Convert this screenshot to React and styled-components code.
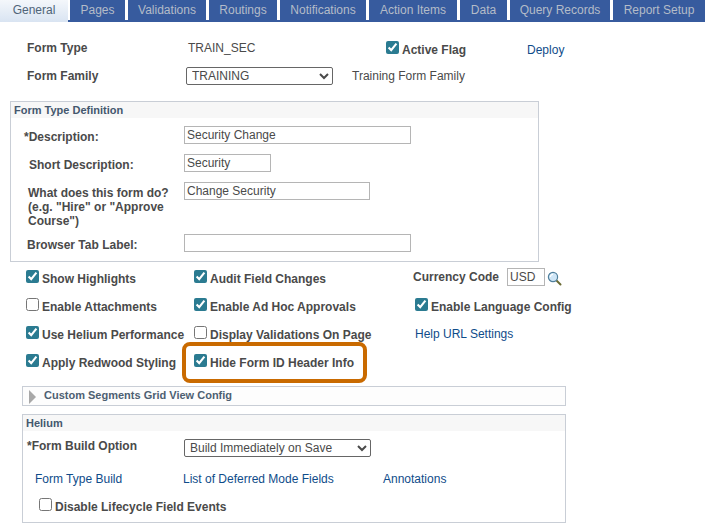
import React from "react";
import styled, { createGlobalStyle } from "styled-components";

const GlobalStyle = createGlobalStyle`
	html, body {
		margin: 0;
		background: #fff;
		font-family: "Liberation Sans", Arial, sans-serif;
		font-size: 12px;
		color: #4a4a4a;
	}
`;

const Page = styled.div`
	position: relative;
	width: 705px;
	height: 524px;
	overflow: hidden;
`;

const TabBar = styled.div`
	display: flex;
	height: 22px;
	background: linear-gradient(to top, #375b9e 2px, transparent 2px);
`;

const Tab = styled.div`
	display: flex;
	align-items: center;
	justify-content: center;
	flex: none;
	box-sizing: border-box;
	width: ${(p) => p.$width}px;
	margin-right: ${(p) => p.$gap}px;
	height: ${(p) => (p.$active ? 22 : 20)}px;
	padding-bottom: ${(p) => (p.$active ? 2 : 0)}px;
	background: ${(p) => (p.$active ? "linear-gradient(#f4f7fb, #d9e4f2)" : "#375b9e")};
	color: ${(p) => (p.$active ? "#4f6478" : "#b4bcc8")};
	font-size: 12px;
	white-space: nowrap;
`;

const Top = styled.div`
	padding: 12px 0 0 27px;
`;

const TopRow = styled.div`
	display: flex;
	align-items: center;
	height: 28px;
`;

const Label = styled.span`
	font-weight: bold;
	color: #4a4a4a;
	white-space: nowrap;
`;

const TopLabel = styled(Label)`
	width: ${(p) => p.$width}px;
`;

const Value = styled.span`
	white-space: nowrap;
	width: ${(p) => (p.$width ? `${p.$width}px` : "auto")};
	margin-left: ${(p) => p.$left || 0}px;
`;

const TextLink = styled.a`
	color: #0f4c8a;
	white-space: nowrap;
	width: ${(p) => (p.$width ? `${p.$width}px` : "auto")};
	margin-left: ${(p) => p.$left || 0}px;
	margin-top: ${(p) => p.$top || 0}px;
`;

const Select = styled.select`
	box-sizing: border-box;
	width: ${(p) => p.$width}px;
	height: 18px;
	padding: 0 0 0 1px;
	border: 1px solid #666;
	border-radius: 2px;
	background-color: #fff;
	color: #4a4a4a;
	font: 12px "Liberation Sans", Arial, sans-serif;
`;

const Group = styled.div`
	box-sizing: border-box;
	margin-left: ${(p) => p.$left}px;
	width: ${(p) => p.$width}px;
	height: ${(p) => (p.$height ? `${p.$height}px` : "auto")};
	border: 1px solid #c9ced6;
`;

const GroupTitle = styled.div`
	height: 16px;
	line-height: 16px;
	padding-left: 3px;
	background: #f7f7f7;
	font-size: 11px;
	font-weight: bold;
	color: #44586e;
`;

const DefinitionBox = styled.div`
	margin-top: 11px;
`;

const DefinitionBody = styled.div`
	padding: 8px 0 9px;
	display: flex;
	flex-direction: column;
`;

const FieldRow = styled.div`
	display: flex;
	margin-bottom: ${(p) => p.$bottom ?? 10}px;
	min-height: 18px;
`;

const FieldLabel = styled(Label)`
	box-sizing: border-box;
	flex: none;
	width: 173px;
	padding: 4px 0 0 ${(p) => p.$indent}px;
	line-height: 14px;
	white-space: normal;
`;

const Input = styled.input`
	box-sizing: border-box;
	flex: none;
	width: ${(p) => p.$width}px;
	height: 18px;
	padding: 0 1px 0 2px;
	border: 1px solid #b5b5b5;
	color: #4a4a4a;
	font: 12px "Liberation Sans", Arial, sans-serif;
	outline: none;
`;

const Options = styled.div`
	margin: 3px 0 9px;
	padding-left: 26px;
	display: grid;
	grid-template-columns: 168px 219px auto;
	grid-auto-rows: 28px;
	align-items: center;
`;

const Check = styled.label`
	display: flex;
	align-items: center;
	gap: 3px;
	padding-left: ${(p) => p.$indent || 0}px;
	margin-top: ${(p) => p.$top || 0}px;
	font-weight: bold;
	color: #4a4a4a;
	white-space: nowrap;

	input {
		flex: none;
		width: 13px;
		height: 13px;
		margin: -5px 0 0;
		accent-color: #2b7b91;
	}
`;

const Currency = styled.div`
	display: flex;
	align-items: center;
	margin-top: -4px;
`;

const CurrencyInput = styled(Input)`
	width: 38px;
	margin-left: 8px;
`;

const SearchSvg = styled.svg`
	flex: none;
	margin: 2px 0 0 2px;
`;

const Highlight = styled.div`
	position: absolute;
	left: 182px;
	top: 342px;
	width: 185px;
	height: 41px;
	box-sizing: border-box;
	border: 4px solid #c96a00;
	border-radius: 8px;
	pointer-events: none;
`;

const Collapsed = styled.div`
	box-sizing: border-box;
	display: flex;
	align-items: center;
	height: 20px;
	margin: 0 0 8px 22px;
	width: 544px;
	border: 1px solid #c9ced6;
	background: #fdfdfd;
	padding: 0 0 2px 6px;
	font-size: 11px;
	font-weight: bold;
	color: #4d6072;
`;

const Triangle = styled.span`
	width: 0;
	height: 0;
	margin: 4px 8px 0 0;
	border-left: 7px solid #a8a8a8;
	border-top: 7px solid transparent;
	border-bottom: 7px solid transparent;
`;

const HeliumBody = styled.div`
	padding: 8px 0 0 4px;
`;

const BuildRow = styled.div`
	display: flex;
	align-items: flex-start;
	height: 18px;
`;

const LinkRow = styled.div`
	display: flex;
	align-items: center;
	height: 14px;
	margin-top: 15px;
`;

const FooterCheck = styled(Check)`
	margin: 14px 0 0 12px;
	height: 14px;
`;

const SearchIcon = () => (
	<SearchSvg width="15" height="15" viewBox="0 0 15 15">
		<line x1="9" y1="9" x2="13.5" y2="13.5" stroke="#6b6b35" strokeWidth="2" strokeLinecap="round" />
		<circle cx="6" cy="6" r="4.6" fill="#cfe6f7" stroke="#4f7f9c" strokeWidth="1.2" />
		<path d="M3.4 6a2.6 2.6 0 0 1 2.6-2.6" fill="none" stroke="#fff" strokeWidth="1.2" />
	</SearchSvg>
);

const tabs = [
	["General", 68, 2],
	["Pages", 55, 3],
	["Validations", 78, 3],
	["Routings", 68, 3],
	["Notifications", 86, 3],
	["Action Items", 88, 3],
	["Data", 47, 3],
	["Query Records", 100, 3],
	["Report Setup", 92, 0],
];

const CheckItem = ({ label, checked, indent, top }) => (
	<Check $indent={indent} $top={top}>
		<input type="checkbox" defaultChecked={checked} />
		{label}
	</Check>
);

const App = () => {
	return (
		<Page>
			<GlobalStyle />
			<TabBar>
				{tabs.map(([name, width, gap], i) => (
					<Tab key={name} $width={width} $gap={gap} $active={i === 0}>
						{name}
					</Tab>
				))}
			</TabBar>

			<Top>
				<TopRow>
					<TopLabel $width={161}>Form Type</TopLabel>
					<Value $width={198}>TRAIN_SEC</Value>
					<CheckItem checked top={4} label="Active Flag" />
					<TextLink $left={61} $top={4}>Deploy</TextLink>
				</TopRow>
				<TopRow>
					<TopLabel $width={159}>Form Family</TopLabel>
					<Select $width={147} defaultValue="TRAINING">
						<option>TRAINING</option>
					</Select>
					<Value $left={19}>Training Form Family</Value>
				</TopRow>
			</Top>

			<DefinitionBox>
				<Group $left={10} $width={529}>
					<GroupTitle>Form Type Definition</GroupTitle>
					<DefinitionBody>
						<FieldRow>
							<FieldLabel $indent={13}>*Description:</FieldLabel>
							<Input $width={227} defaultValue="Security Change" />
						</FieldRow>
						<FieldRow>
							<FieldLabel $indent={18}>Short Description:</FieldLabel>
							<Input $width={87} defaultValue="Security" />
						</FieldRow>
						<FieldRow $bottom={6}>
							<FieldLabel $indent={17}>
								What does this form do?
								<br />
								(e.g. "Hire" or "Approve
								<br />
								Course")
							</FieldLabel>
							<Input $width={186} defaultValue="Change Security" />
						</FieldRow>
						<FieldRow $bottom={0}>
							<FieldLabel $indent={16}>Browser Tab Label:</FieldLabel>
							<Input $width={227} defaultValue="" />
						</FieldRow>
					</DefinitionBody>
				</Group>
			</DefinitionBox>

			<Options>
				<CheckItem checked label="Show Highlights" />
				<CheckItem checked label="Audit Field Changes" />
				<Currency>
					<Label>Currency Code</Label>
					<CurrencyInput defaultValue="USD" />
					<SearchIcon />
				</Currency>
				<CheckItem label="Enable Attachments" />
				<CheckItem checked label="Enable Ad Hoc Approvals" />
				<CheckItem checked indent={2} label="Enable Language Config" />
				<CheckItem checked label="Use Helium Performance" />
				<CheckItem label="Display Validations On Page" />
				<TextLink $left={2} $top={-2}>Help URL Settings</TextLink>
				<CheckItem checked label="Apply Redwood Styling" />
				<CheckItem checked label="Hide Form ID Header Info" />
			</Options>

			<Collapsed>
				<Triangle />
				Custom Segments Grid View Config
			</Collapsed>

			<Group $left={22} $width={544} $height={109}>
				<GroupTitle>Helium</GroupTitle>
				<HeliumBody>
					<BuildRow>
						<TopLabel $width={157}>*Form Build Option</TopLabel>
						<Select $width={187} defaultValue="build">
							<option value="build">Build Immediately on Save</option>
						</Select>
					</BuildRow>
					<LinkRow>
						<TextLink $left={8} $width={148}>Form Type Build</TextLink>
						<TextLink $width={200}>List of Deferred Mode Fields</TextLink>
						<TextLink>Annotations</TextLink>
					</LinkRow>
					<FooterCheck>
						<input type="checkbox" />
						Disable Lifecycle Field Events
					</FooterCheck>
				</HeliumBody>
			</Group>

			<Highlight />
		</Page>
	);
};

export default App;
